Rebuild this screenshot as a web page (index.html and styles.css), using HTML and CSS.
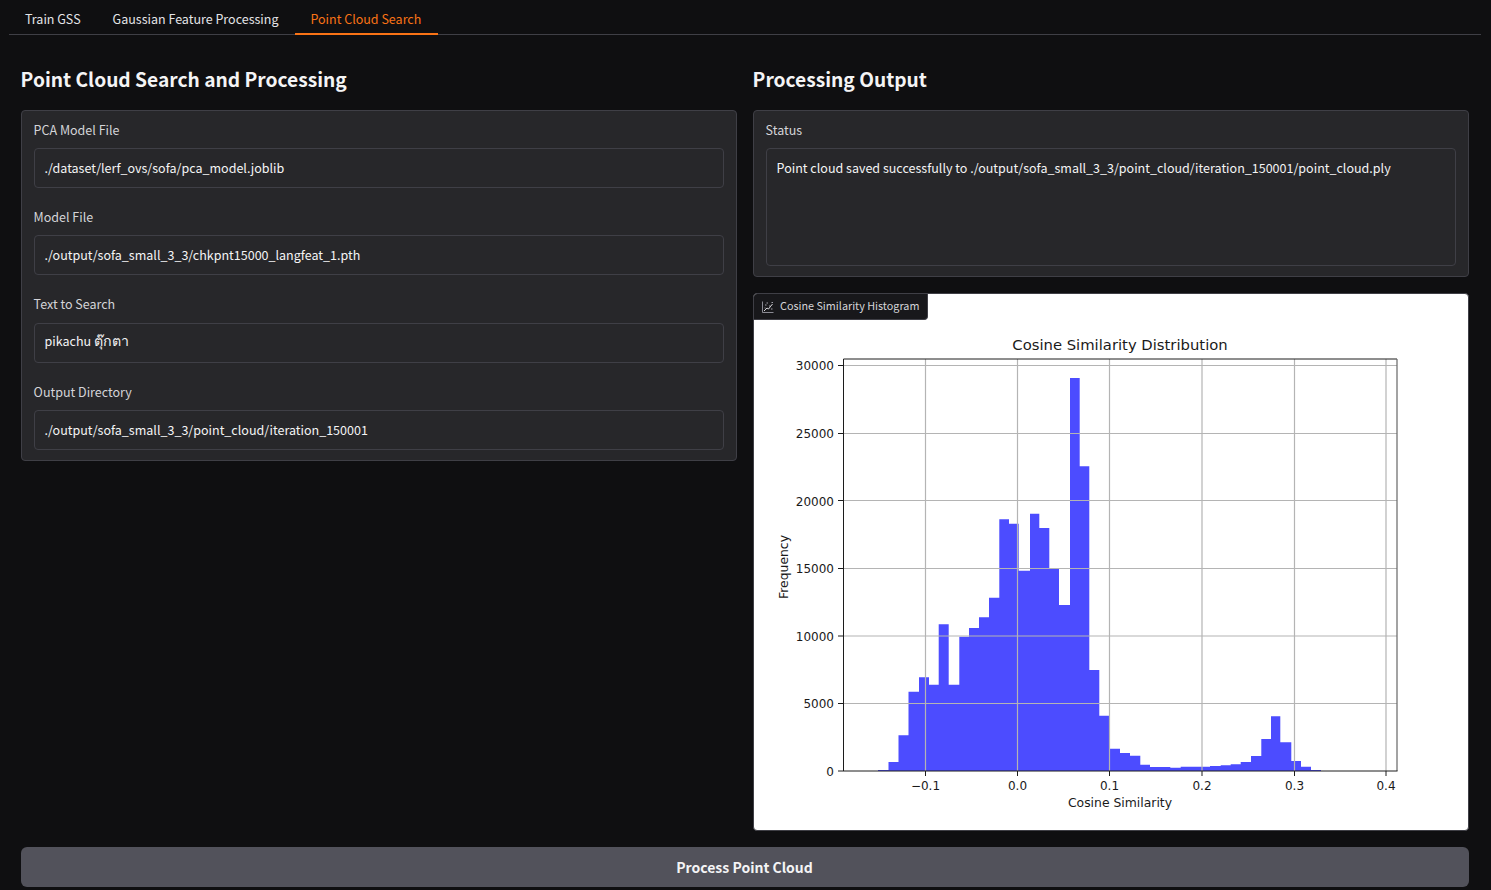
FILE: index.html
```html
<!DOCTYPE html>
<html lang="en">
<head>
<meta charset="utf-8">
<title>Point Cloud Search</title>
<link rel="stylesheet" href="styles.css">
</head>
<body>
<nav class="tabs">
  <div class="tab">Train GSS</div>
  <div class="tab">Gaussian Feature Processing</div>
  <div class="tab tab-active">Point Cloud Search</div>
</nav>
<main class="page">
  <div class="columns">
    <section class="column">
      <h2 class="heading">Point Cloud Search and Processing</h2>
      <div class="panel form-panel">
        <div class="field">
          <label class="label">PCA Model File</label>
          <div class="input">./dataset/lerf_ovs/sofa/pca_model.joblib</div>
        </div>
        <div class="field">
          <label class="label">Model File</label>
          <div class="input">./output/sofa_small_3_3/chkpnt15000_langfeat_1.pth</div>
        </div>
        <div class="field">
          <label class="label label-tight">Text to Search</label>
          <div class="input input-mixed">pikachu <span class="thai">ตุ๊กตา</span></div>
        </div>
        <div class="field">
          <label class="label">Output Directory</label>
          <div class="input">./output/sofa_small_3_3/point_cloud/iteration_150001</div>
        </div>
      </div>
    </section>
    <section class="column">
      <h2 class="heading">Processing Output</h2>
      <div class="panel status-panel">
        <div class="field">
          <label class="label">Status</label>
          <div class="input textarea">Point cloud saved successfully to ./output/sofa_small_3_3/point_cloud/iteration_150001/point_cloud.ply</div>
        </div>
      </div>
      <div class="plot-panel">
        <div class="plot-tag">
          <svg class="plot-icon" viewBox="0 0 12 12" width="12" height="12">
            <path class="icon-axis" d="M.5 .5V11.5H11.5"/>
            <path class="icon-line" d="M2 10 5 7l1.500 1L10.500 3"/>
            <path class="icon-dots" d="M3 4h1.500M4.500 2h1.500M7 5h1.500M9 8h1.500M9.500 1.500h1.500M2.500 7h1"/>
          </svg>
          <span class="plot-tag-text">Cosine Similarity Histogram</span>
        </div>
        <svg class="chart" viewBox="754 294 714 535" width="714" height="535">
          <text class="chart-title" x="1120" y="350" text-anchor="middle">Cosine Similarity Distribution</text>
          <path class="bars" d="M878 771V770H888.5V762H898.5V735.3H908.5V691.7H919V677.3H929V684.7H938.7V624.3H948.7V684.7H959.3V636.7H969V628H979V617.3H989V597.7H999.3V519.3H1009V523.7H1018.7V570.7H1030V513.7H1039.3V528H1049.3V568.7H1059V605H1070V378H1079.7V466.3H1089.3V670H1099.3V715.7H1109.3V748.7H1120V753H1130V755.7H1140.3V764.7H1150V767H1170.3V767.7H1180.7V766.7H1210V766H1220.7V765.3H1230.7V764.3H1240.7V762H1251V756H1261.3V739H1271V716.3H1280.3V742.3H1291.3V761H1301V766.7H1311V770H1321V771Z"/>
          <path class="grid" d="M925.5 359V771M1017.5 359V771M1109.5 359V771M1202 359V771M1294.5 359V771M1386 359V771M844 365.500H1397M844 433.500H1397M844 500.500H1397M844 568.500H1397M844 636H1397M844 703.500H1397"/>
          <path class="spine" d="M843.5 771V359H1397"/>
          <path class="spine-right" d="M1397 359V771"/>
          <path class="spine" d="M843 771H1397.5"/>
          <path class="ticks" d="M838 365.500h5M838 433.500h5M838 500.500h5M838 568.500h5M838 636h5M838 703.500h5M838 771h5M925.5 771v5M1017.5 771v5M1109.5 771v5M1202 771v5M1294.5 771v5M1386 771v5"/>
          <g class="tick-labels-y" text-anchor="end">
            <text x="834" y="370">30000</text>
            <text x="834" y="438">25000</text>
            <text x="834" y="505.500">20000</text>
            <text x="834" y="573">15000</text>
            <text x="834" y="640.500">10000</text>
            <text x="834" y="708">5000</text>
            <text x="834" y="776">0</text>
          </g>
          <g class="tick-labels-x" text-anchor="middle">
            <text x="925.500" y="790">−0.1</text>
            <text x="1017.500" y="790">0.0</text>
            <text x="1109.500" y="790">0.1</text>
            <text x="1202" y="790">0.2</text>
            <text x="1294.500" y="790">0.3</text>
            <text x="1386" y="790">0.4</text>
          </g>
          <text class="axis-label" x="1120" y="806.500" text-anchor="middle">Cosine Similarity</text>
          <text class="axis-label" transform="translate(788 567) rotate(-90)" text-anchor="middle">Frequency</text>
        </svg>
      </div>
    </section>
  </div>
  <button class="primary" type="button">Process Point Cloud</button>
</main>
</body>
</html>
```

FILE: styles.css
```css
* { box-sizing: border-box; }

html, body {
  margin: 0;
  height: 100%;
  overflow: hidden;
  background: #0f0f11;
}

body {
  font-family: "Noto Sans CJK JP", "Noto Sans", "DejaVu Sans", sans-serif;
  font-size: 12.5px;
  color: #f4f4f5;
}

.tabs {
  display: flex;
  height: 35px;
  margin: 0 10px 0 9px;
  border-bottom: 1px solid #3f3f46;
}

.tab {
  height: 35px;
  padding: 0 16px;
  line-height: 38px;
  color: #e4e4e7;
  white-space: nowrap;
}

.tab-active {
  margin-left: .6px;
  padding: 0 16.6px 0 15.4px;
  color: #f97316;
  border-bottom: 2px solid #f97316;
}

.page { padding: 0 22px 0 21px; }

.columns {
  display: grid;
  grid-template-columns: 716px 716px;
  gap: 16px;
  align-items: start;
}

.heading {
  margin: 0 0 16px -.4px;
  padding-top: 29px;
  font-size: 19.2px;
  font-weight: 600;
  line-height: 30px;
  color: #f4f4f5;
}

.panel {
  background: #27272a;
  border: 1px solid #3f3f46;
  border-radius: 4px;
  padding: 9px 12px 10px;
}

.form-panel {
  display: flex;
  flex-direction: column;
  gap: 19.33px;
}

.label {
  display: block;
  height: 20px;
  margin: 0 0 8px -.4px;
  line-height: 19px;
  color: #d4d4d8;
}

.label-tight { line-height: 17.500px; }

.input {
  height: 40px;
  padding: 0 10px 0 9.6px;
  font-size: 12.52px;
  line-height: 38px;
  background: #27272a;
  border: 1px solid #3f3f46;
  border-radius: 4px;
  color: #f4f4f5;
}

.input-mixed { line-height: 32.500px; }

.thai { font-size: 14.2px; }

.textarea { height: 118px; }

.plot-panel {
  position: relative;
  height: 538px;
  margin-top: 16px;
  background: #fff;
  border: 1px solid #3f3f46;
  border-radius: 4px;
  overflow: hidden;
}

.plot-tag {
  position: absolute;
  top: 0;
  left: 0;
  display: flex;
  align-items: center;
  gap: 6px;
  width: 174px;
  height: 26px;
  padding-left: 8px;
  background: #18181b;
  border-right: 1px solid #3f3f46;
  border-bottom: 1px solid #3f3f46;
  border-bottom-right-radius: 4px;
  color: #d4d4d8;
}

.plot-tag-text {
  padding-bottom: 4px;
  font-size: 10.8px;
  white-space: nowrap;
}

.plot-icon { flex: none; }
.icon-axis, .icon-line, .icon-dots { fill: none; stroke-width: 1; }
.icon-axis { stroke: #8a8a93; }
.icon-line { stroke: #d4d4d8; }
.icon-dots { stroke: #a1a1aa; }

.chart { display: block; }

.chart text {
  font-family: "DejaVu Sans", sans-serif;
  fill: #1a1a1a;
}

.chart .chart-title { font-size: 14.8px; }
.tick-labels-y, .tick-labels-x { font-size: 12px; }
.chart .axis-label { font-size: 12.4px; }

.bars { fill: #4c4cff; }
.grid { fill: none; stroke: #b4b4b4; stroke-width: 1.2; }
.spine { fill: none; stroke: #1c1c1c; stroke-width: 1; }
.spine-right { fill: none; stroke: #666; stroke-width: 1.2; }
.ticks { fill: none; stroke: #1c1c1c; stroke-width: 1; }

.primary {
  display: block;
  width: 1448px;
  height: 40px;
  margin-top: 16px;
  padding: 0 1px 0 0;
  background: #52525b;
  border: 0;
  border-radius: 6px;
  font-family: inherit;
  font-size: 14px;
  font-weight: 600;
  color: #f4f4f5;
}
```
